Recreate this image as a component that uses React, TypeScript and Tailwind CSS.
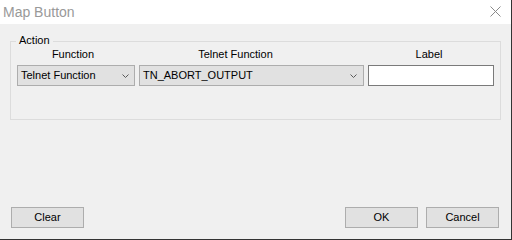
import React from 'react';

function Chevron() {
  return (
    <svg width="7" height="4" viewBox="0 0 7 4" className="shrink-0">
      <polyline points="0.5,0.5 3.5,3.5 6.5,0.5" fill="none" stroke="#5a5a5a" strokeWidth="1" />
    </svg>
  );
}

function Select({ value, width, pr }: { value: string; width: string; pr: string }) {
  return (
    <div
      className={`flex h-[21px] items-center justify-between border border-[#adadad] bg-[#e1e1e1] pl-[3px] ${width} ${pr}`}
    >
      <span className="leading-[13px]">{value}</span>
      <Chevron />
    </div>
  );
}

function Button({ children }: { children: React.ReactNode }) {
  return (
    <div className="flex h-[21px] w-[73px] items-center justify-center border border-[#adadad] bg-[#e1e1e1] leading-[13px]">
      {children}
    </div>
  );
}

export default function App() {
  return (
    <div
      className="flex h-[240px] w-[512px] flex-col border-r border-b border-[#333333] bg-[#f0f0f0] text-[11px] text-black"
      style={{ fontFamily: '"Liberation Sans", Arial, sans-serif' }}
    >
      {/* title bar */}
      <div className="flex h-[24px] shrink-0 items-center justify-between bg-white pb-[1px] pl-[3px] pr-[10px]">
        <span className="text-[14px] leading-[16px] text-[#999999]">Map Button</span>
        <svg width="11" height="11" viewBox="0 0 11 11">
          <line x1="0.5" y1="0.5" x2="10.5" y2="10.5" stroke="#8a8a8a" strokeWidth="1" />
          <line x1="10.5" y1="0.5" x2="0.5" y2="10.5" stroke="#8a8a8a" strokeWidth="1" />
        </svg>
      </div>

      <div className="flex flex-1 flex-col">
        {/* Action group */}
        <div className="relative ml-[10px] mt-[17px] h-[79px] w-[491px] border border-[#dcdcdc] pl-[6px] pt-[6px]">
          <span className="absolute -top-[8px] left-[5px] bg-[#f0f0f0] px-[3px] leading-[13px]">Action</span>

          <div className="flex leading-[13px]">
            <div className="w-[118px] pr-[6px] text-center">Function</div>
            <div className="ml-[4px] w-[225px] pr-[32px] text-center">Telnet Function</div>
            <div className="ml-[4px] w-[126px] pr-[4px] text-center">Label</div>
          </div>

          <div className="mt-[4px] flex">
            <Select value="Telnet Function" width="w-[118px]" pr="pr-[5px]" />
            <div className="ml-[4px]">
              <Select value="TN_ABORT_OUTPUT" width="w-[225px]" pr="pr-[6px]" />
            </div>
            <div className="ml-[4px] h-[21px] w-[126px] border border-[#7a7a7a] bg-white" />
          </div>
        </div>

        <div className="flex-1" />

        {/* buttons */}
        <div className="mb-[11px] flex items-center pl-[11px] pr-[12px]">
          <Button>Clear</Button>
          <div className="flex-1" />
          <Button>OK</Button>
          <div className="ml-[8px]">
            <Button>Cancel</Button>
          </div>
        </div>
      </div>
    </div>
  );
}
